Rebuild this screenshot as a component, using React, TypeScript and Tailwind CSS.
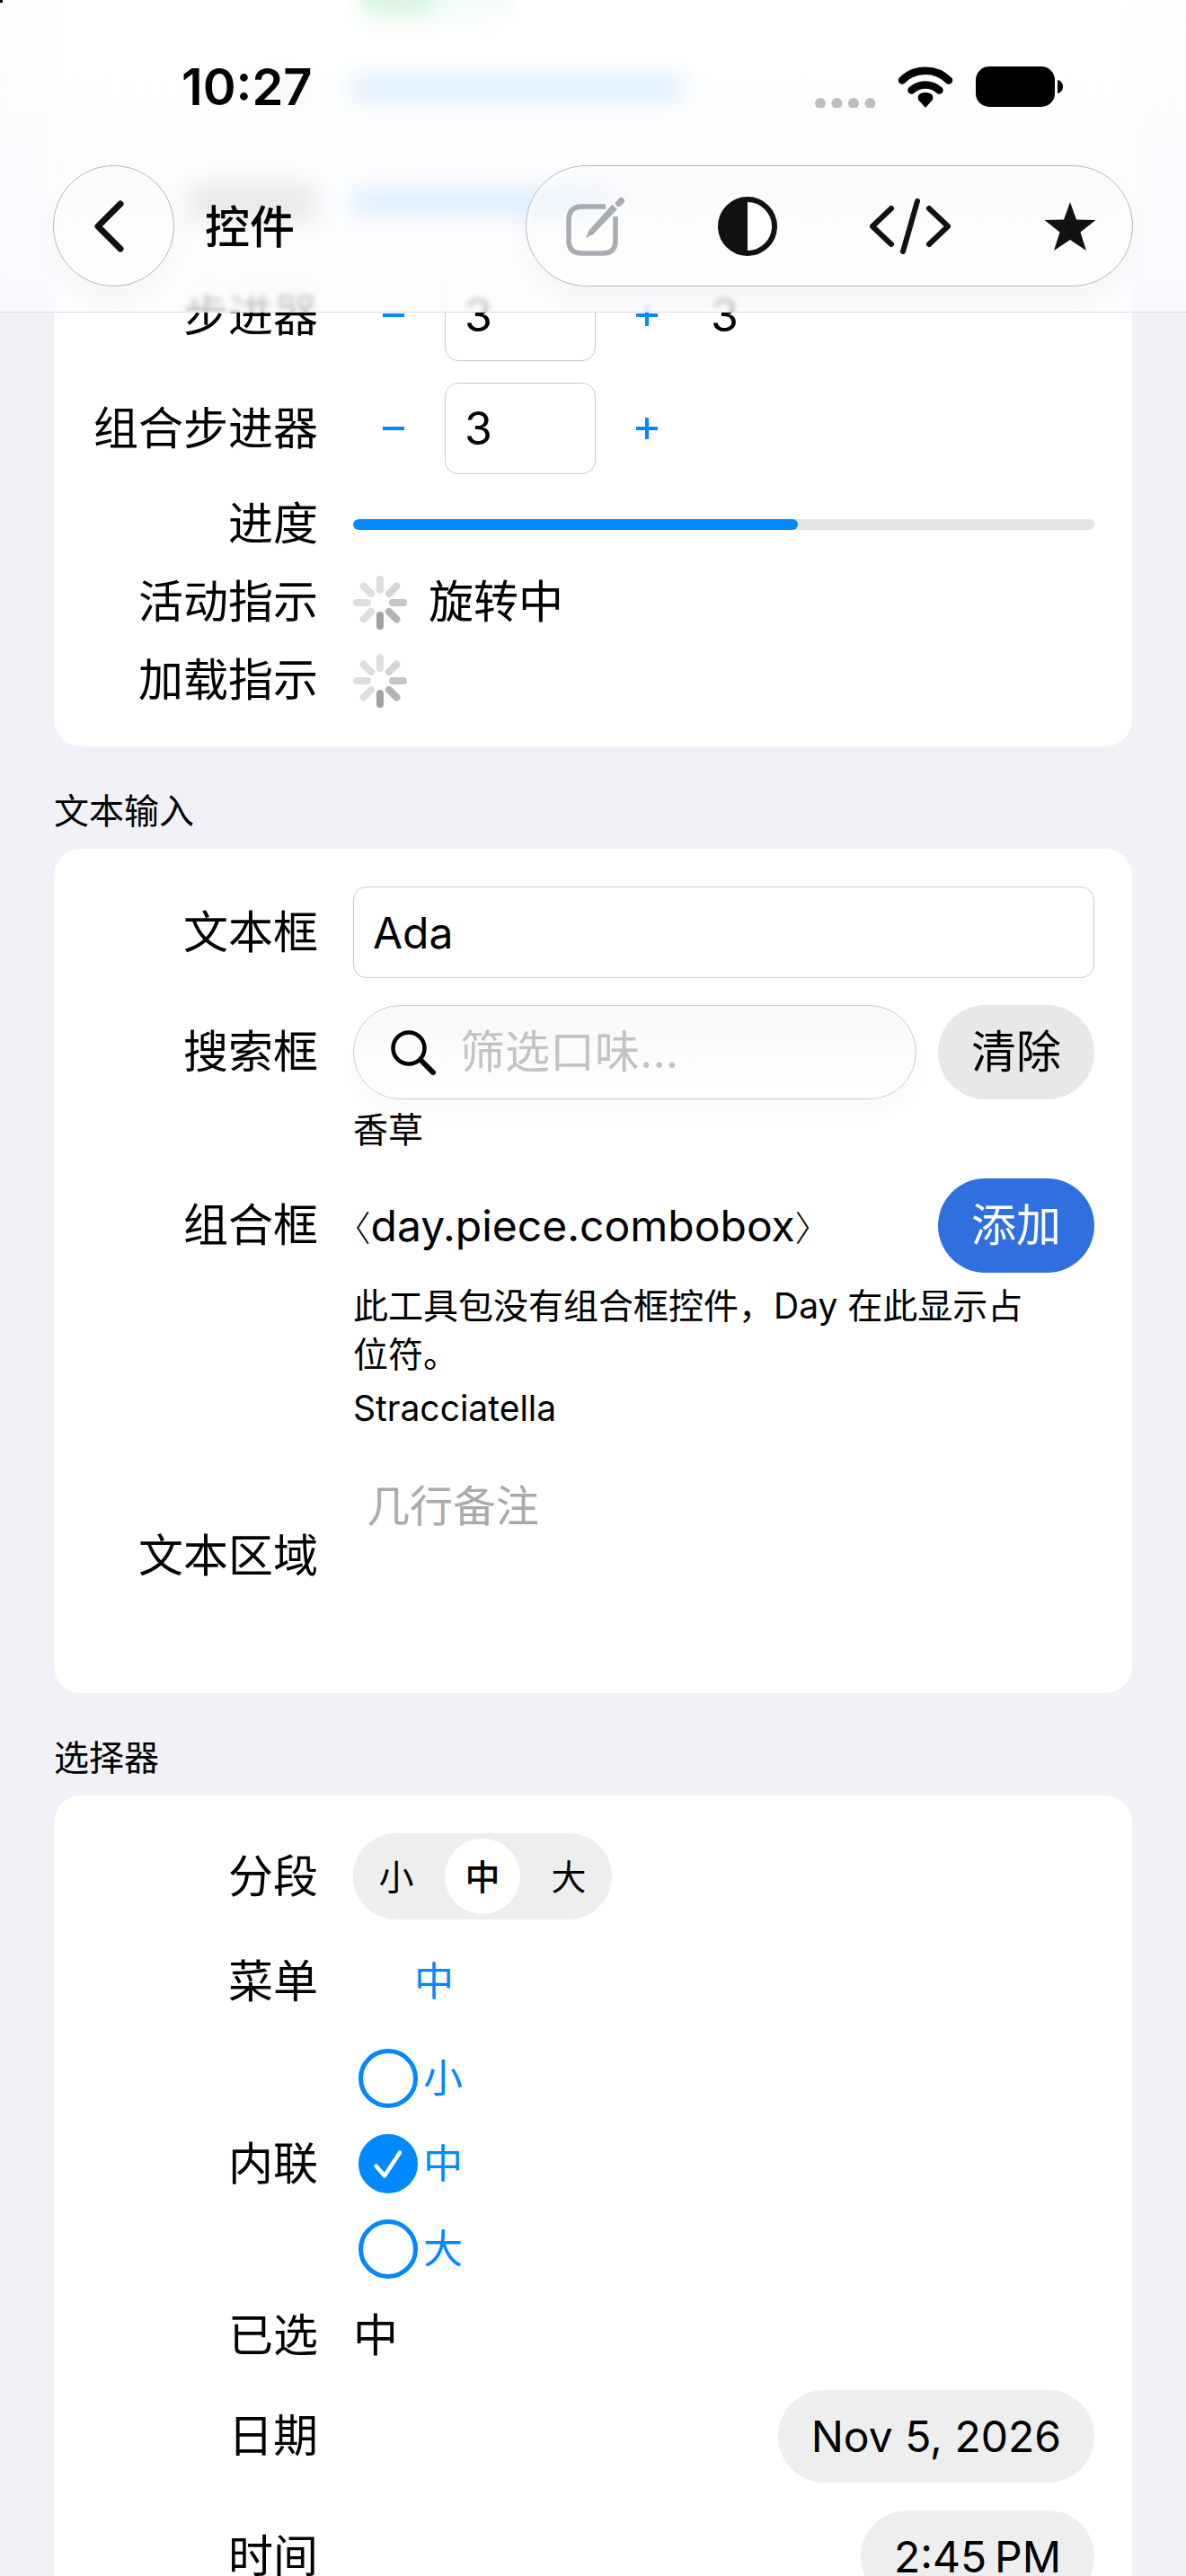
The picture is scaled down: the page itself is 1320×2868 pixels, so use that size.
import { useState, type ReactNode } from "react";

const SIZES = ["小", "中", "大"];
const TICKS = ["#dedede", "#d6d6d8", "#c6c6c8", "#b4b4b6", "#a2a2a4", "#dedede", "#dedede", "#dedede"];

interface RowProps {
  label: string;
  htmlFor?: string;
  labelClass?: string;
  className?: string;
  children: ReactNode;
}

function Row({ label, htmlFor, labelClass = "", className = "items-center", children }: RowProps) {
  return (
    <div className={`flex gap-[39px] ${className}`}>
      <label htmlFor={htmlFor} className={`flex w-[253px] shrink-0 items-center justify-end whitespace-nowrap ${labelClass}`}>
        {label}
      </label>
      <div className="min-w-0 flex-1">{children}</div>
    </div>
  );
}

function Section({ title, children }: { title: string; children: ReactNode }) {
  return (
    <section>
      <h2 className="flex h-[114px] items-center pt-[30px] text-[39px] leading-[54px]">{title}</h2>
      <div className="flex flex-col rounded-[30px] bg-white p-[42px] pl-[41px]">{children}</div>
    </section>
  );
}

function Stepper({ id, value, onChange, showValue }: { id: string; value: number; onChange: (n: number) => void; showValue?: boolean }) {
  return (
    <div className="flex items-center gap-3">
      <button aria-label="减少" onClick={() => onChange(value - 1)} className="flex h-[102px] w-[90px] items-center justify-center text-[#0088ff]">
        <svg width="24" height="24" viewBox="0 0 24 24" fill="none" stroke="currentColor" strokeWidth="4">
          <path d="M0 12h24" />
        </svg>
      </button>
      <input
        id={id}
        inputMode="numeric"
        value={value}
        onChange={(e) => onChange(parseInt(e.target.value) || 0)}
        className="h-[102px] w-[168px] rounded-[15px] border border-[#c9c9cb] bg-white px-[21px] outline-none"
      />
      <button aria-label="增加" onClick={() => onChange(value + 1)} className="flex h-[102px] w-[90px] items-center justify-center text-[#0088ff]">
        <svg width="24" height="24" viewBox="0 0 24 24" fill="none" stroke="currentColor" strokeWidth="4">
          <path d="M0 12h24M12 0v24" />
        </svg>
      </button>
      {showValue && <output className="pl-[14px]">{value}</output>}
    </div>
  );
}

function Spinner() {
  return (
    <svg width="60" height="60" viewBox="0 0 60 60" className="shrink-0" aria-hidden="true">
      {TICKS.map((color, i) => (
        <line key={i} x1="30" y1="4" x2="30" y2="16" stroke={color} strokeWidth="8" strokeLinecap="round" transform={`rotate(${i * 45} 30 30)`} />
      ))}
    </svg>
  );
}

function StatusBar() {
  return (
    <div className="flex h-[184px] items-start justify-between pt-[67px] pr-[136px] pl-[202px]">
      <time className="text-[56px] leading-[60px] font-semibold">10:27</time>
      <div className="flex items-center pt-[7px]">
        <svg width="68" height="46" viewBox="0 0 68 46" fill="#bebebe">
          <circle cx="6" cy="41" r="6" />
          <circle cx="24.5" cy="41" r="6" />
          <circle cx="43" cy="41" r="6" />
          <circle cx="61.5" cy="41" r="6" />
        </svg>
        <svg width="62" height="46" viewBox="0 0 62 46" className="ml-6" fill="none" stroke="#000" strokeWidth="8.5" strokeLinecap="round">
          <path d="M5 15.5C19 1 43 1 57 15.5" />
          <path d="M15.5 26.5c9-8 22-8 31 0" />
          <path d="M31 46l-8-9c-1.800-6 3-8 8-8s9.800 2 8 8z" fill="#000" stroke="none" />
        </svg>
        <svg width="98" height="46" viewBox="0 0 98 46" className="ml-[25px]">
          <rect width="88" height="45" rx="15" />
          <path d="M91 15c8 1.500 8 13.500 0 15z" />
        </svg>
      </div>
    </div>
  );
}

const glass = "border border-[#b6b6b9] bg-linear-to-b from-[#f7f7f9]/50 to-white/70 shadow-[0_12px_30px_rgba(0,0,0,0.03),inset_0_0_8px_rgba(255,255,255,1)]";

function Header() {
  return (
    <header className="absolute inset-x-0 top-0 z-10 border-b border-[#dddde1]">
      {/* frosted backing, the blur thins out towards the lower edge */}
      <div className="absolute inset-0 backdrop-blur-[14px] [mask-image:linear-gradient(to_bottom,black_86%,transparent_94%)]" />
      <div className="absolute inset-0 backdrop-blur-[3px]" />
      <div className="absolute inset-0 bg-linear-to-b from-white/80 via-[#fcfcff]/80 via-90% to-[#fbfbff]/75" />
      <div className="relative">
        <StatusBar />
        <div className="flex items-center px-[59px] pb-7">
          <button aria-label="返回" className={`flex size-[135px] items-center justify-center rounded-full ${glass}`}>
            <svg width="34" height="58" viewBox="0 0 34 58" fill="none" stroke="#111" strokeWidth="7" strokeLinecap="round" strokeLinejoin="round" className="mr-6 ml-3">
              <path d="M30 4L5 29l25 25" />
            </svg>
          </button>
          <h1 className="flex-1 pt-1 pl-[34px] font-medium">控件</h1>
          <div className={`flex h-[135px] w-[676px] items-center justify-between rounded-full pr-10 pl-11 ${glass}`}>
            <button aria-label="编辑" disabled className="text-[#a9adb2]">
              <svg width="66" height="66" viewBox="0 0 66 66" fill="none" stroke="currentColor" strokeWidth="5.500">
                <path d="M44 11H18Q3 11 3 26v23q0 14 15 14h23q14 0 14-14V22" />
                <path d="M58.500 7.500l3-3" strokeWidth="7" strokeLinecap="round" />
                <path d="M51.500 8.500l5.500 5.500L30 42l-8 4 3.500-8.500z" fill="currentColor" stroke="none" />
              </svg>
            </button>
            <button aria-label="外观">
              <svg width="66" height="66" viewBox="0 0 66 66">
                <circle cx="33" cy="33" r="30" fill="#fff" stroke="#111" strokeWidth="6" />
                <path d="M33 2a31 31 0 000 62z" fill="#111" />
              </svg>
            </button>
            <button aria-label="代码">
              <svg width="92" height="64" viewBox="0 0 92 64" fill="none" stroke="#111" strokeWidth="6" strokeLinecap="round" strokeLinejoin="round">
                <path d="M25 12L4 32l21 20M67 12l21 20-21 20M54 4L38 60" />
              </svg>
            </button>
            <button aria-label="收藏">
              <svg width="58" height="56" viewBox="0 0 58 56" fill="#111">
                <path d="M29 1l7 19.500 21.500.5-17 13.500L47 55 29 43 11 55l6.500-20.500L.5 21l21.500-.5z" />
              </svg>
            </button>
          </div>
        </div>
      </div>
    </header>
  );
}

export default function App() {
  const [step, setStep] = useState(3);
  const [combo, setCombo] = useState(3);
  const [name, setName] = useState("Ada");
  const [query, setQuery] = useState("");
  const [size, setSize] = useState("中");

  return (
    <div className="relative h-screen overflow-hidden bg-[#f2f1f7] font-['Inter','Noto_Sans_CJK_SC','DejaVu_Sans',sans-serif] text-[50px] leading-[63px] text-black">
      <div className="absolute top-0 left-0 z-20 size-[3px] bg-black" />
      <Header />
      <main className="px-[60px]">
        <section className="flex flex-col gap-6 rounded-b-[30px] bg-white px-[42px] pb-[42px] pl-[41px]">
          {/* controls scrolled away under the header */}
          <div className="flex h-[276px] flex-col" aria-hidden="true">
            <div className="flex h-[18px] pl-[300px]">
              <div className="w-[80px] rounded-bl-full bg-[#34c759]" />
              <div className="w-[90px] rounded-br-full bg-[#b4efe0]" />
            </div>
            <div className="mt-[70px] flex items-center">
              <div className="mr-[50px] ml-[180px] h-[20px] w-[62px] bg-[#c8c8cc]" />
              <div className="h-[20px] w-[364px] bg-[#0088ff]" />
              <div className="h-[12px] flex-1 bg-[#f4f4f6]" />
            </div>
            <div className="mt-[98px] flex items-center">
              <div className="mr-[42px] ml-[110px] h-[38px] w-[140px] bg-[#8a8a8e]" />
              <div className="h-[20px] w-[280px] bg-[#0088ff]" />
              <div className="h-[12px] flex-1 bg-[#e4e4e5]" />
            </div>
          </div>
          <Row label="步进器" htmlFor="stepper">
            <Stepper id="stepper" value={step} onChange={setStep} showValue />
          </Row>
          <Row label="组合步进器" htmlFor="combo-stepper">
            <Stepper id="combo-stepper" value={combo} onChange={setCombo} />
          </Row>
          <Row label="进度">
            <div role="progressbar" aria-valuenow={60} aria-label="进度" className="h-3 overflow-hidden rounded-full bg-[#e4e4e5]">
              <div className="h-full w-3/5 rounded-full bg-[#0088ff]" />
            </div>
          </Row>
          <Row label="活动指示">
            <div className="flex items-center gap-6">
              <Spinner />
              <span>旋转中</span>
            </div>
          </Row>
          <Row label="加载指示">
            <Spinner />
          </Row>
        </section>

        <Section title="文本输入">
          <div className="flex flex-col gap-[30px]">
            <Row label="文本框" htmlFor="name">
              <input
                id="name"
                value={name}
                onChange={(e) => setName(e.target.value)}
                className="block h-[102px] w-full rounded-[15px] border border-[#c9c9cb] px-[21px] text-[48px] outline-none"
              />
            </Row>
            <Row label="搜索框" htmlFor="search" className="items-start" labelClass="h-[105px]">
              <div className="flex gap-6">
                <div className="flex h-[105px] min-w-0 flex-1 items-center gap-[27px] rounded-full border border-[#cbcbcd] bg-linear-to-b from-[#f8f8f8] to-white pl-[41px] shadow-[0_18px_24px_rgba(0,0,0,0.02),inset_0_0_10px_#fff]">
                  <svg width="50" height="50" viewBox="0 0 50 50" fill="none" stroke="#000" strokeWidth="4.500" strokeLinecap="round" className="shrink-0">
                    <circle cx="20" cy="20" r="17.500" />
                    <path d="M33 33l14 14" strokeWidth="6" />
                  </svg>
                  <input
                    id="search"
                    value={query}
                    onChange={(e) => setQuery(e.target.value)}
                    placeholder="筛选口味..."
                    className="min-w-0 flex-1 bg-transparent outline-none placeholder:text-[#c3c3c5]"
                  />
                </div>
                <button onClick={() => setQuery("")} className="h-[105px] w-[174px] rounded-full bg-[#e8e8ea]">清除</button>
              </div>
              <p className="pt-[10px] text-[39px] leading-[48px]">香草</p>
            </Row>
            <Row label="组合框" className="items-start" labelClass="h-[105px]">
              <div className="flex items-center justify-between">
                <span className="flex items-center text-[48px]">
                  <span className="font-['Noto_Sans_CJK_SC'] text-[39px] font-light [font-feature-settings:'halt']">〈</span>
                  day.piece.combobox
                  <span className="font-['Noto_Sans_CJK_SC'] text-[39px] font-light [font-feature-settings:'halt']">〉</span>
                </span>
                <button className="h-[105px] w-[174px] rounded-full bg-[#3070de] text-white">添加</button>
              </div>
              <p className="max-w-[760px] pt-[10px] text-[39px] leading-[54px]">此工具包没有组合框控件，Day 在此显示占位符。</p>
              <p className="pt-[10px] text-[39px] leading-[46px]">Stracciatella</p>
            </Row>
            <Row label="文本区域" htmlFor="notes">
              <textarea
                id="notes"
                placeholder="几行备注"
                className="block h-[222px] w-full resize-none px-[15px] py-[26px] text-[48px] leading-[60px] outline-none placeholder:text-[#aaaaaa]"
              />
            </Row>
          </div>
        </Section>

        <Section title="选择器">
          <div className="flex flex-col gap-6">
            <Row label="分段">
              <div role="group" aria-label="分段" className="flex h-[96px] w-[288px] rounded-full bg-[#eeeeee] text-[39px]">
                {SIZES.map((s) => (
                  <button
                    key={s}
                    aria-pressed={size === s}
                    onClick={() => setSize(s)}
                    className={`m-[6px] flex-1 rounded-full ${size === s ? "bg-white font-medium" : ""}`}
                  >
                    {s}
                  </button>
                ))}
              </div>
            </Row>
            <Row label="菜单" htmlFor="menu">
              <select
                id="menu"
                value={size}
                onChange={(e) => setSize(e.target.value)}
                className="block h-[90px] w-[180px] appearance-none text-center text-[44px] text-[#0088ff] outline-none [text-align-last:center]"
              >
                {SIZES.map((s) => (
                  <option key={s}>{s}</option>
                ))}
              </select>
            </Row>
            <Row label="内联">
              <div role="radiogroup" aria-label="内联" className="flex flex-col items-start gap-[29px] py-[6px] pl-[6px] text-[44px] text-[#0088ff]">
                {SIZES.map((s) => (
                  <label key={s} className="flex h-[66px] items-center gap-[6px]">
                    <span className="relative flex size-[66px]">
                      <input
                        type="radio"
                        name="inline-size"
                        checked={size === s}
                        onChange={() => setSize(s)}
                        className="size-[66px] appearance-none rounded-full border-[5px] border-[#0088ff] checked:bg-[#0088ff]"
                      />
                      {size === s && (
                        <svg width="66" height="66" viewBox="0 0 66 66" fill="none" stroke="#fff" strokeWidth="4.500" strokeLinecap="round" strokeLinejoin="round" className="pointer-events-none absolute inset-0">
                          <path d="M19.500 35.500L29 46.500l17-26" />
                        </svg>
                      )}
                    </span>
                    {s}
                  </label>
                ))}
              </div>
            </Row>
            <Row label="已选">
              <span className="flex h-[66px] items-center">{size}</span>
            </Row>
            <Row label="日期" htmlFor="date">
              <div className="flex h-[110px] items-center justify-end">
                <button id="date" className="h-[103px] rounded-full bg-[#eeeeee] px-[37px] text-[48px]">Nov 5, 2026</button>
              </div>
            </Row>
            <Row label="时间" htmlFor="time">
              <div className="flex h-[110px] items-center justify-end">
                <button id="time" className="h-[103px] rounded-full bg-[#eeeeee] px-[37px] text-[48px]">2:45&#8239;PM</button>
              </div>
            </Row>
          </div>
        </Section>
      </main>
    </div>
  );
}
